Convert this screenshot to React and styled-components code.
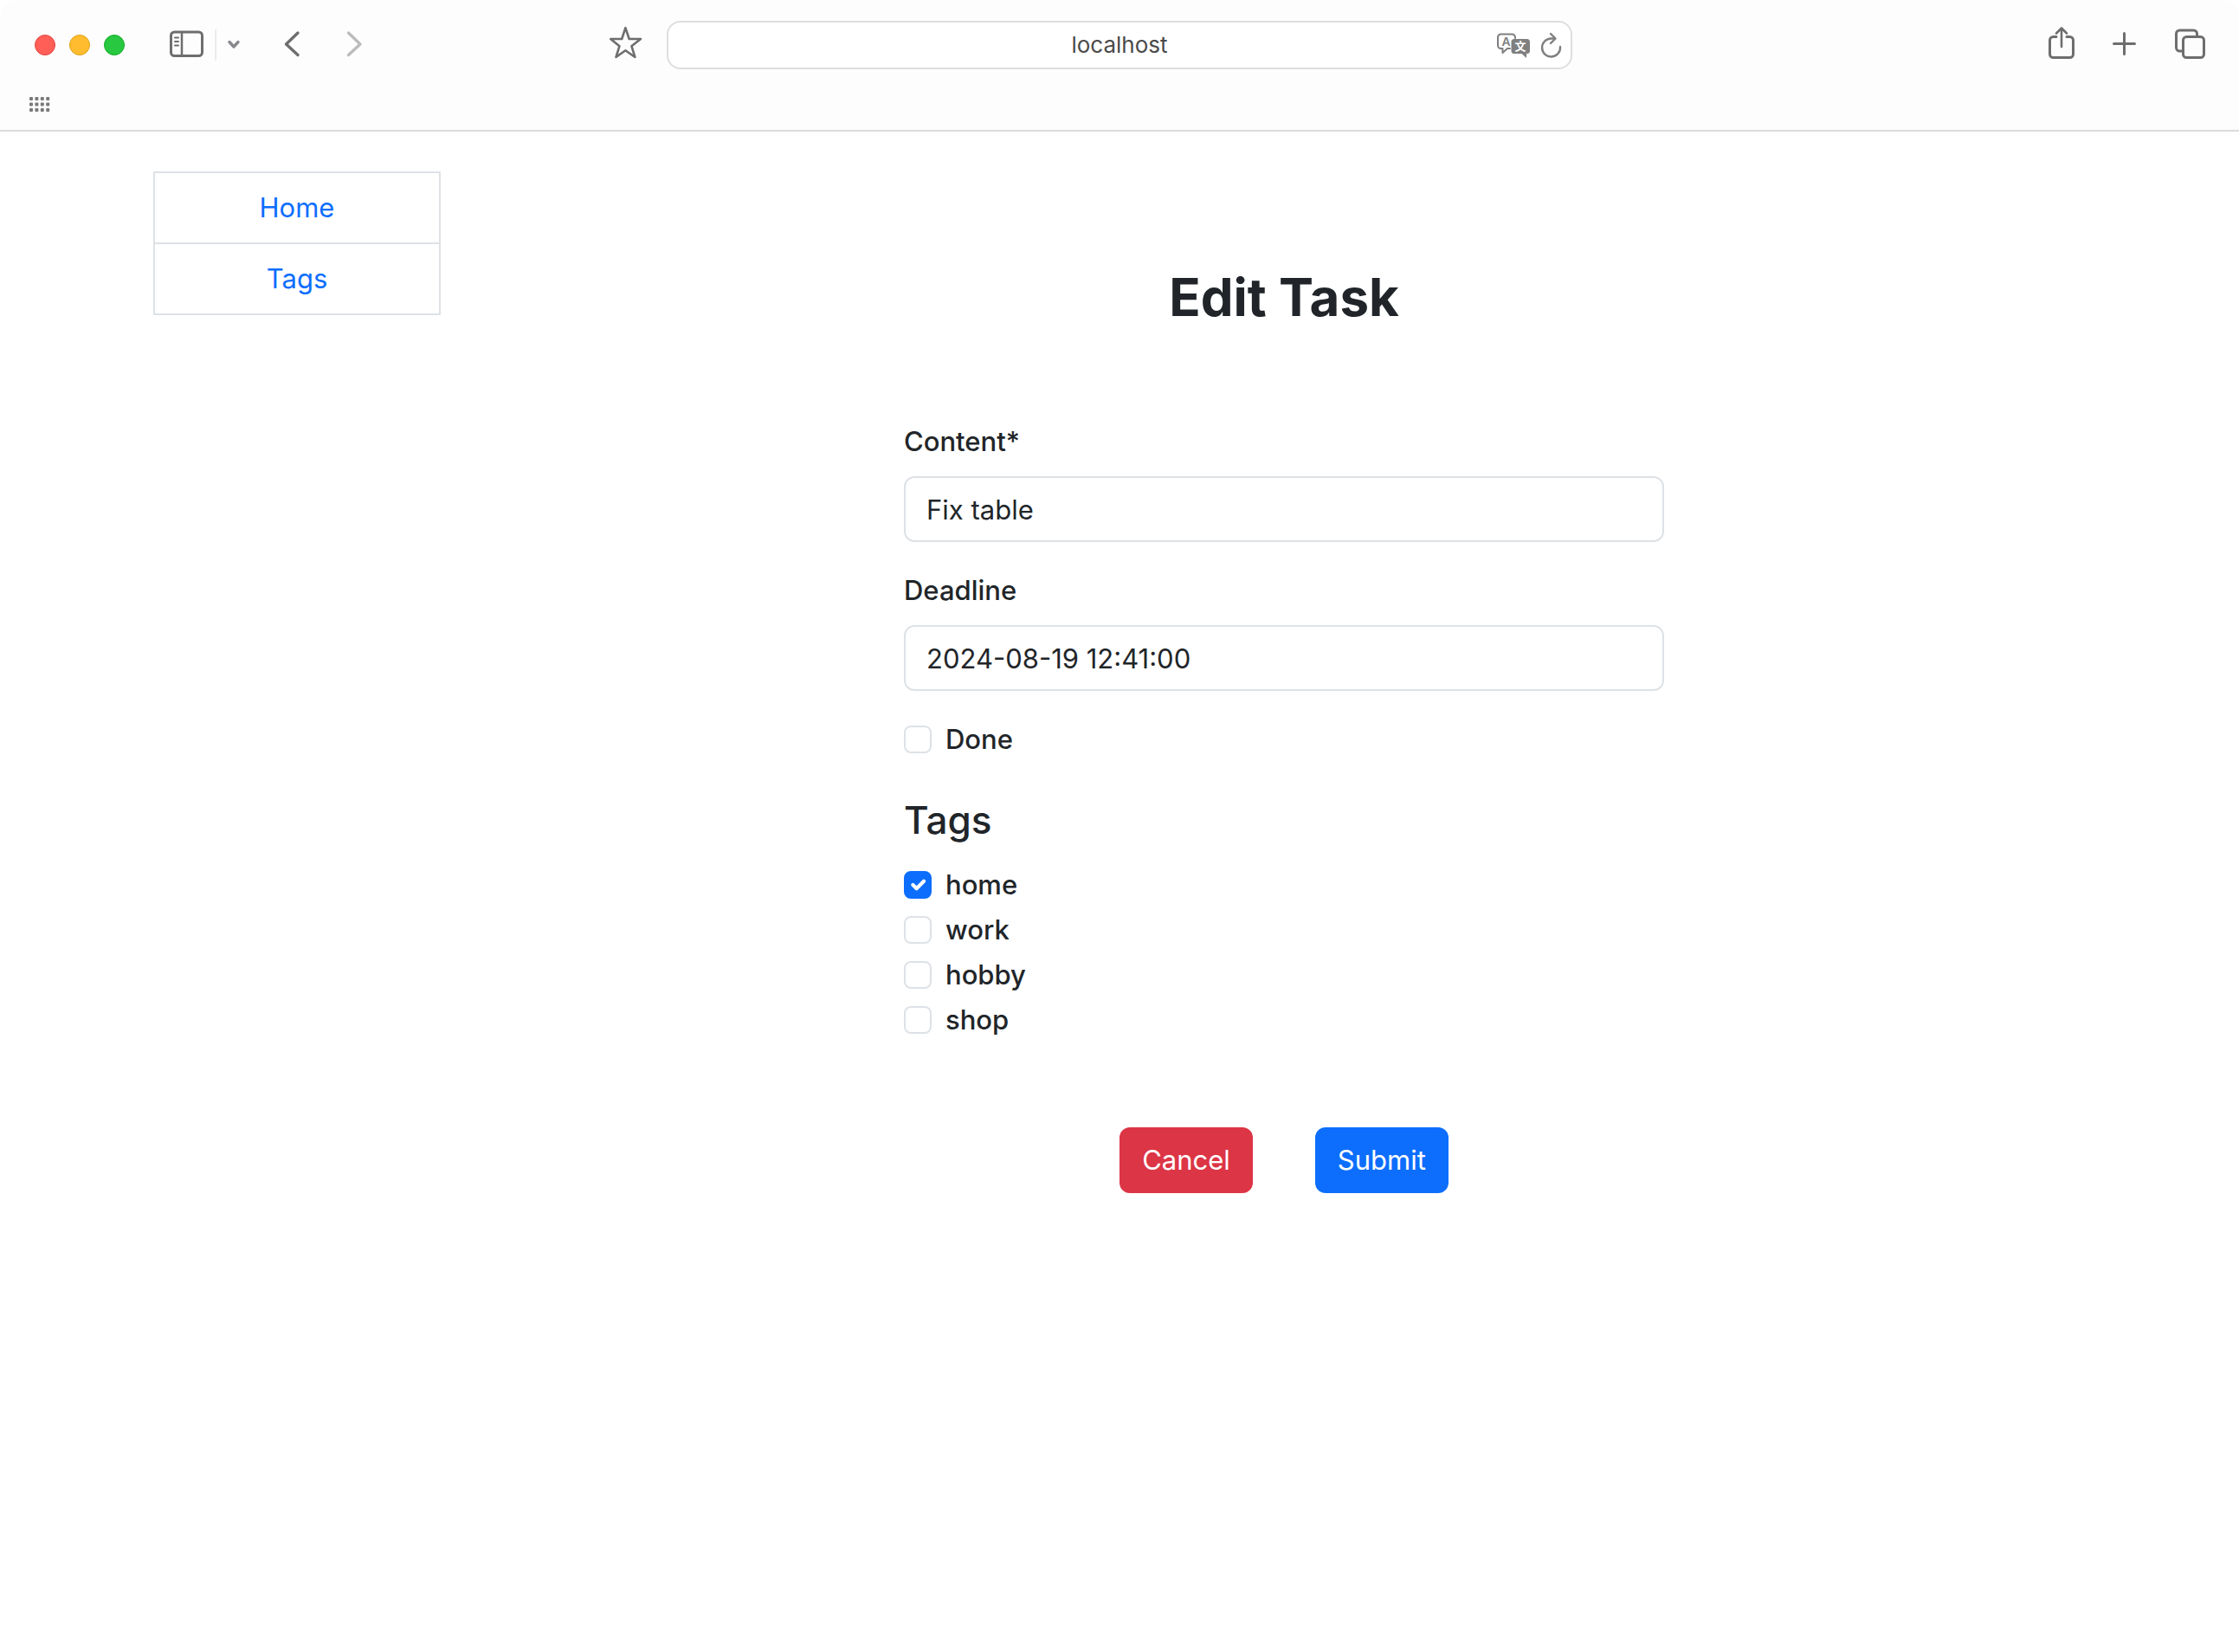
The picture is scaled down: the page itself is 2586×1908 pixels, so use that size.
import React from 'react';
import styled, { createGlobalStyle } from 'styled-components';

const GlobalStyle = createGlobalStyle`
  *, *::before, *::after { box-sizing: border-box; }
  body {
    margin: 0;
    background: #fff;
    color: #212529;
    font-family: Inter, "Liberation Sans", sans-serif;
    font-size: 31px;
    line-height: 48px;
  }
`;

const Window = styled.div`
  display: flex;
  flex-direction: column;
  min-height: 100vh;
  background: #fff;
`;

const Chrome = styled.header`
  background: #fdfdfd;
  border-bottom: 2px solid #dcdcdc;
  border-radius: 20px 20px 0 0;
`;

const Toolbar = styled.div`
  display: grid;
  grid-template-columns: 1fr minmax(0, 1046px) 1fr;
  align-items: center;
  padding: 24px 40px 0;
`;

const Group = styled.div`
  display: flex;
  align-items: center;
`;

const Lights = styled(Group)`
  gap: 16px;
  margin-right: 52px;
`;

const Light = styled.button`
  width: 24px;
  height: 24px;
  padding: 0;
  border: 1px solid ${(p) => p.$edge};
  border-radius: 50%;
  background: ${(p) => p.$fill};
`;

const IconButton = styled.button`
  display: flex;
  padding: 0;
  border: 0;
  background: none;
  color: ${(p) => p.$color || '#6e6e6e'};
`;

const Divider = styled.span`
  width: 2px;
  height: 36px;
  margin: 0 13px;
  background: #ececec;
`;

const NavArrows = styled(Group)`
  gap: 54px;
  margin-left: 51px;
`;

const LeftTools = styled(Group)`
  padding-right: 28px;
`;

const StarSlot = styled.div`
  margin-left: auto;
`;

const RightTools = styled(Group)`
  justify-content: flex-end;
  gap: 44px;
`;

const AddressBar = styled.div`
  display: grid;
  grid-template-rows: 52px;
  grid-template-columns: 1fr auto 1fr;
  align-items: center;
  height: 56px;
  padding: 0 10px;
  border: 2px solid #dedede;
  border-radius: 16px;
  background: #fff;
`;

const Address = styled.span`
  grid-column: 2;
  color: #4a4a4a;
  font-size: 26px;
  line-height: 32px;
`;

const AddressTools = styled(Group)`
  justify-content: flex-end;
  gap: 12px;
`;

const Favorites = styled.div`
  padding: 32px 34px 20px;
`;

const Page = styled.div`
  display: grid;
  grid-template-columns: minmax(0, 1fr) minmax(0, 5fr);
  width: 100%;
  max-width: 2280px;
  margin: 0 auto;
  padding-top: 46px;
`;

const Column = styled.div`
  padding: 0 24px;
`;

const Menu = styled.nav`
  display: flex;
  flex-direction: column;
  border: 2px solid #dee2e6;
`;

const MenuLink = styled.a`
  padding: 16px;
  color: #0d6efd;
  text-align: center;
  text-decoration: none;

  & + & {
    border-top: 2px solid #dee2e6;
  }
`;

const Title = styled.h1`
  margin: 106px 0 104px;
  font-size: 60px;
  font-weight: 700;
  line-height: 78px;
  text-align: center;
`;

const Form = styled.form`
  width: calc(50% - 48px);
  margin: 0 auto;
`;

const Field = styled.div`
  display: flex;
  flex-direction: column;
  gap: 16px;
  margin-bottom: 32px;
`;

const Label = styled.label`
  font-weight: 500;
`;

const TextInput = styled.input`
  width: 100%;
  height: 76px;
  padding: 12px 24px;
  border: 2px solid #dee2e6;
  border-radius: 12px;
  background: #fff;
  color: inherit;
  font: inherit;
`;

const CheckRow = styled.div`
  display: flex;
  align-items: center;
  gap: 16px;
`;

const Checkbox = styled.input`
  appearance: none;
  width: 32px;
  height: 32px;
  margin: 0;
  border: 2px solid #dee2e6;
  border-radius: 8px;
  background: #fff;

  &:checked {
    border-color: #0d6efd;
    background: #0d6efd center / contain no-repeat
      url("data:image/svg+xml,%3Csvg xmlns='http://www.w3.org/2000/svg' viewBox='0 0 20 20'%3E%3Cpath fill='none' stroke='%23fff' stroke-linecap='round' stroke-linejoin='round' stroke-width='3' d='m6 10 3 3 6-6'/%3E%3C/svg%3E");
  }
`;

const Subheading = styled.h2`
  margin: 40px 0 22px;
  font-size: 44px;
  font-weight: 500;
  line-height: 58px;
`;

const TagList = styled.div`
  display: flex;
  flex-direction: column;
  gap: 4px;
`;

const Actions = styled.div`
  display: flex;
  justify-content: center;
  gap: 72px;
  margin-top: 100px;
`;

const Button = styled.button`
  height: 76px;
  padding: 0 26px;
  border: 0;
  border-radius: 12px;
  background: ${(p) => (p.$danger ? '#dc3545' : '#0d6efd')};
  color: #fff;
  font: inherit;
`;

const IconSvg = styled.svg`
  display: block;
  flex: none;
  overflow: visible;
  fill: none;
  stroke: currentColor;
  stroke-linecap: round;
  stroke-linejoin: round;
`;

const Icon = ({ w, h = 56, sw = 3, children }) => (
  <IconSvg width={w} height={h} viewBox={`0 0 ${w} ${h}`} strokeWidth={sw} aria-hidden="true">
    {children}
  </IconSvg>
);

const SidebarIcon = () => (
  <Icon w={39}>
    <rect x="1.5" y="13" width="36" height="27.5" rx="4" />
    <path d="M14 13V40.5" strokeWidth="2.5" />
    <path d="M6 19.5H10M6 24H10M6 28.5H10" strokeWidth="2" />
  </Icon>
);

const StarIcon = () => (
  <Icon w={38} sw={2.6}>
    <path d="M18.4 8.2L22.7 21H36L25.4 29.2L29.4 42L18.4 34.3L7.5 42L11.5 29.2L1.2 21H14.2Z" />
  </Icon>
);

const TranslateIcon = () => (
  <Icon w={40} sw={2}>
    <path d="M16 32H13L7.5 37V32H5.500A3.5 3.5 0 0 1 2 28.5V19A3.5 3.5 0 0 1 5.5 15.5H18.5A3.5 3.5 0 0 1 22 19V20" />
    <path
      d="M21 21H35.5A3.5 3.5 0 0 1 39 24.5V34.5A3.5 3.5 0 0 1 35.5 38H35V43L29.5 38H21A3.5 3.5 0 0 1 17.5 34.5V24.5A3.5 3.5 0 0 1 21 21Z"
      fill="currentColor" stroke="none"
    />
    <text x="11.5" y="28.5" fontSize="14" fontWeight="600" textAnchor="middle" fill="currentColor" stroke="none">A</text>
    <text x="28" y="34" fontSize="13" fontWeight="700" fontFamily="'Noto Sans CJK SC', sans-serif" textAnchor="middle" fill="#fff" stroke="none">文</text>
  </Icon>
);

const ReloadIcon = () => (
  <Icon w={24} sw={2.4}>
    <path d="M22 30A10.5 10.5 0 1 1 11.5 20.5H16" />
    <path d="M11 15L16.5 20.5L11 26" />
  </Icon>
);

const ShareIcon = () => (
  <Icon w={30}>
    <path d="M9 18.5H5.500A4 4 0 0 0 1.5 22.5V38.500A4 4 0 0 0 5.5 42.5H24.500A4 4 0 0 0 28.5 38.5V22.500A4 4 0 0 0 24.5 18.5H21" />
    <path d="M15 30V9M9 14.5L15 8.5L21 14.5" strokeWidth="2.6" />
  </Icon>
);

const TabsIcon = () => (
  <Icon w={35}>
    <rect x="2.5" y="11" width="24" height="24" rx="4" />
    <rect x="10.5" y="18.5" width="24" height="24" rx="4" fill="#fdfdfd" />
  </Icon>
);

const dotColumns = [0, 6.4, 12.8, 19.2];
const dotRows = [0, 6.5, 13];

const GridIcon = () => (
  <Icon w={24} h={18}>
    {dotRows.map((y) => dotColumns.map((x) => (
      <rect key={`${x}-${y}`} x={x} y={y} width="4" height="4" rx="1" fill="currentColor" stroke="none" />
    )))}
  </Icon>
);

const Check = ({ id, children, ...rest }) => (
  <CheckRow>
    <Checkbox type="checkbox" id={id} {...rest} />
    <Label htmlFor={id}>{children}</Label>
  </CheckRow>
);

const tags = ['home', 'work', 'hobby', 'shop'];

export default function App() {
  return (
    <Window>
      <GlobalStyle />
      <Chrome>
        <Toolbar>
          <LeftTools>
            <Lights>
              <Light aria-label="Close" $fill="#ff5f57" $edge="#e2463f" />
              <Light aria-label="Minimize" $fill="#febc2e" $edge="#e1a116" />
              <Light aria-label="Zoom" $fill="#28c840" $edge="#12ac28" />
            </Lights>
            <IconButton aria-label="Sidebar"><SidebarIcon /></IconButton>
            <Divider />
            <IconButton aria-label="Tab groups" $color="#88888d">
              <Icon w={14} sw={3.4}><path d="M2 24.5L7 30L12 24.5" /></Icon>
            </IconButton>
            <NavArrows>
              <IconButton aria-label="Back">
                <Icon w={18} sw={3.4}><path d="M16 14L2.5 27L16 39.5" /></Icon>
              </IconButton>
              <IconButton aria-label="Forward" $color="#bcbcbc">
                <Icon w={18} sw={3.4}><path d="M2.5 14L16 27L2.5 39.5" /></Icon>
              </IconButton>
            </NavArrows>
            <StarSlot>
              <IconButton aria-label="Bookmark"><StarIcon /></IconButton>
            </StarSlot>
          </LeftTools>
          <AddressBar>
            <Address>localhost</Address>
            <AddressTools>
              <IconButton aria-label="Translate" $color="#7f7f7f"><TranslateIcon /></IconButton>
              <IconButton aria-label="Reload" $color="#7f7f7f"><ReloadIcon /></IconButton>
            </AddressTools>
          </AddressBar>
          <RightTools>
            <IconButton aria-label="Share"><ShareIcon /></IconButton>
            <IconButton aria-label="New tab">
              <Icon w={27}><path d="M13.5 14.5V38.5M1.5 26.5H25.5" /></Icon>
            </IconButton>
            <IconButton aria-label="Tab overview"><TabsIcon /></IconButton>
          </RightTools>
        </Toolbar>
        <Favorites>
          <IconButton aria-label="Favorites" $color="#7a7a7a"><GridIcon /></IconButton>
        </Favorites>
      </Chrome>
      <Page>
        <Column>
          <Menu>
            <MenuLink href="#home">Home</MenuLink>
            <MenuLink href="#tags">Tags</MenuLink>
          </Menu>
        </Column>
        <Column>
          <Title>Edit Task</Title>
          <Form>
            <Field>
              <Label htmlFor="content">Content*</Label>
              <TextInput id="content" type="text" defaultValue="Fix table" />
            </Field>
            <Field>
              <Label htmlFor="deadline">Deadline</Label>
              <TextInput id="deadline" type="text" defaultValue="2024-08-19 12:41:00" />
            </Field>
            <Check id="done">Done</Check>
            <Subheading>Tags</Subheading>
            <TagList>
              {tags.map((tag) => (
                <Check key={tag} id={tag} defaultChecked={tag === 'home'}>{tag}</Check>
              ))}
            </TagList>
            <Actions>
              <Button type="button" $danger>Cancel</Button>
              <Button type="submit">Submit</Button>
            </Actions>
          </Form>
        </Column>
      </Page>
    </Window>
  );
}
